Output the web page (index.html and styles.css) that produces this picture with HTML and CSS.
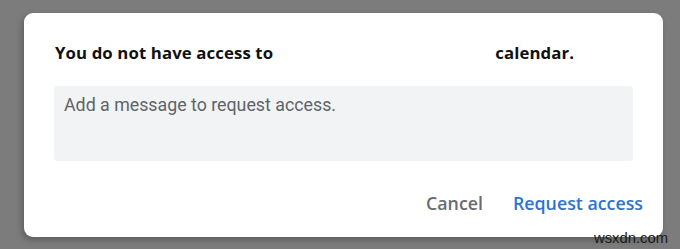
FILE: index.html
```html
<!DOCTYPE html>
<html>
<head>
<meta charset="utf-8">
<link rel="stylesheet" href="styles.css">
</head>
<body>
<div class="dialog">
  <h1 class="title"><span>You do not have access to</span><span class="masked"></span><span>calendar.</span></h1>
  <div class="message">Add a message to request access.</div>
  <div class="actions">
    <button class="btn cancel">Cancel</button>
    <button class="btn primary">Request access</button>
  </div>
</div>
<div class="watermark">wsxdn.com</div>
</body>
</html>
```
FILE: styles.css
```css
html, body {
  margin: 0;
  padding: 0;
}
body {
  background: #7c7c7c;
  width: 680px;
  height: 249px;
  overflow: hidden;
  position: relative;
  padding-top: 13px;
  box-sizing: border-box;
}
.dialog {
  margin-left: 24px;
  width: 639px;
  height: 224px;
  background: #fff;
  border-radius: 9px;
  box-shadow: -2px 3px 6px rgba(0,0,0,0.25);
  box-sizing: border-box;
  padding: 29px 30px 0 30px;
  display: flex;
  flex-direction: column;
}
.title {
  margin: 0;
  font-family: "Open Sans", "Liberation Sans", sans-serif;
  font-weight: 700;
  font-size: 16.8px;
  line-height: 22px;
  color: #111;
  padding-left: 1px;
  display: flex;
  letter-spacing: 0.1px;
}
.masked {
  width: 222px;
}
.message {
  margin-top: 22px;
  height: 75px;
  background: #f1f3f4;
  border-radius: 4px;
  font-family: "Roboto", "Liberation Sans", sans-serif;
  font-size: 17.8px;
  line-height: 22px;
  color: #5f6368;
  padding: 8px 10px;
  box-sizing: border-box;
}
.actions {
  margin-top: 31px;
  display: flex;
  justify-content: flex-end;
  gap: 30px;
  margin-right: -10px;
}
.btn {
  border: none;
  background: none;
  padding: 0;
  font-family: "Open Sans", "Liberation Sans", sans-serif;
  font-size: 17.8px;
  line-height: 22px;
  font-weight: 600;
  cursor: pointer;
}
.cancel {
  color: #686c70;
}
.primary {
  color: #2a74d8;
}
.watermark {
  position: absolute;
  right: 12px;
  top: 230px;
  font-family: "Liberation Sans", Arial, sans-serif;
  font-size: 14.8px;
  line-height: 16px;
  color: #1a1a1a;
}
```
